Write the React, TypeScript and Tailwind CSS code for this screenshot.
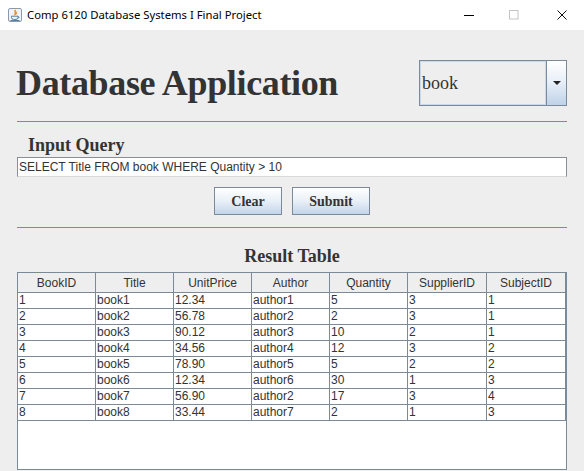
import React from 'react'

const headers = ['BookID', 'Title', 'UnitPrice', 'Author', 'Quantity', 'SupplierID', 'SubjectID']

const rows = [
  ['1', 'book1', '12.34', 'author1', '5', '3', '1'],
  ['2', 'book2', '56.78', 'author2', '2', '3', '1'],
  ['3', 'book3', '90.12', 'author3', '10', '2', '1'],
  ['4', 'book4', '34.56', 'author4', '12', '3', '2'],
  ['5', 'book5', '78.90', 'author5', '5', '2', '2'],
  ['6', 'book6', '12.34', 'author6', '30', '1', '3'],
  ['7', 'book7', '56.90', 'author2', '17', '3', '4'],
  ['8', 'book8', '33.44', 'author7', '2', '1', '3']
]

const JavaIcon = () => (
  <svg width="14" height="14" viewBox="0 0 14 14">
    <rect x="0.5" y="0.5" width="13" height="13" rx="1.5" fill="#f1f3f6" stroke="#8d99aa" />
    <path d="M7.5 2 C5.8 3.8 8.6 4.6 6.6 7" fill="none" stroke="#e76f00" strokeWidth="1.2" />
    <path d="M8.8 3.6 C7.8 4.8 9.2 5.4 8 6.6" fill="none" stroke="#e76f00" strokeWidth="0.9" />
    <path d="M3.5 8.2 H10 V9.6 A2 2 0 0 1 8 11.4 H5.5 A2 2 0 0 1 3.5 9.6 Z" fill="none" stroke="#5382a1" strokeWidth="1" />
    <path d="M10 8.8 H11 V9.8 H10" fill="none" stroke="#5382a1" strokeWidth="0.8" />
    <path d="M2.5 12.5 H11.5" stroke="#5382a1" strokeWidth="1" />
  </svg>
)

const TitleBar = () => (
  <div className="h-[30px] shrink-0 bg-white flex items-center">
    <div className="ml-[8px]">
      <JavaIcon />
    </div>
    <span className="ml-[5px] text-[11.3px] text-black font-['Noto_Sans',sans-serif] leading-none">
      Comp 6120 Database Systems I Final Project
    </span>
    <div className="ml-auto flex items-center mr-[17px]">
      {/* minimize */}
      <div className="w-[10px] h-px bg-black" />
      {/* maximize (disabled) */}
      <svg width="10" height="10" viewBox="0 0 10 10" className="ml-[35px]">
        <rect x="0.5" y="0.5" width="8.5" height="8.5" fill="none" stroke="#c4c4c4" />
      </svg>
      {/* close */}
      <svg width="10" height="10" viewBox="0 0 10 10" className="ml-[38px]">
        <path d="M0.5 0.5 L9.5 9.5 M9.5 0.5 L0.5 9.5" stroke="#111" strokeWidth="1" />
      </svg>
    </div>
  </div>
)

const ComboBox = () => (
  <div className="ml-auto w-[148px] h-[46px] border border-[#7a8a99] flex">
    <div className="flex-1 border border-[#c9d9eb] bg-[#eeeeee] flex items-center pl-[1px] text-[18px] text-[#333333] font-['Liberation_Serif',serif]">
      book
    </div>
    <div className="w-[20px] border-l border-[#7a8a99] bg-linear-to-b from-white via-[#e6eef7] to-[#bfd2e8] flex items-center justify-center">
      <svg width="8" height="4" viewBox="0 0 8 4">
        <path d="M0 0 H8 L4 4 Z" fill="#222" />
      </svg>
    </div>
  </div>
)

const Button = ({ label, width }: { label: string; width: string }) => (
  <button
    className={`${width} h-[28px] pt-[1px] border border-[#7a8a99] bg-linear-to-b from-white via-[#e9f0f8] to-[#c3d5ea] text-[14px] font-bold text-[#333333] font-['Liberation_Serif',serif] leading-none`}
  >
    {label}
  </button>
)

const ResultTable = () => (
  <div className="mt-[6px] mx-[17px] h-[198px] border border-[#7a8a99] bg-white font-['Liberation_Sans',Arial,sans-serif] text-[12px] text-[#333333]">
    <div className="grid grid-cols-[78px_78px_78px_78px_78px_79px_79px]">
      {headers.map((h) => (
        <div
          key={h}
          className="h-[20px] border-r border-b border-[#7a8a99] bg-[#eeeeee] text-center pt-[2px] leading-[17px]"
        >
          {h}
        </div>
      ))}
    </div>
    {rows.map((r, i) => (
      <div key={i} className="grid grid-cols-[78px_78px_78px_78px_78px_79px_79px]">
        {r.map((c, j) => (
          <div key={j} className="h-[16px] border-r border-b border-[#7a8a99] pl-[1px] leading-[15px]">
            {c}
          </div>
        ))}
      </div>
    ))}
  </div>
)

export default function App() {
  return (
    <div className="w-[584px] h-[471px] bg-[#eeeeee] overflow-hidden flex flex-col">
      <TitleBar />

      <div className="mt-[30px] h-[46px] flex items-center pl-[16px] pr-[17px]">
        <h1 className="text-[36px] leading-[36px] font-bold tracking-[-0.35px] text-[#333333] font-['Liberation_Serif',serif]">
          Database Application
        </h1>
        <ComboBox />
      </div>

      <div className="mt-[15px] mx-[17px] h-px bg-[#6d8bc7]" />

      <div className="mt-[13px] pl-[28px] text-[18px] leading-[20px] font-bold text-[#333333] font-['Liberation_Serif',serif]">
        Input Query
      </div>

      <div className="mt-[2px] mx-[17px] h-[20px] bg-white border border-[#8a8f96] border-b-[#d9d9d9] flex items-center pl-[1px] text-[12px] text-[#333333] font-['Liberation_Sans',Arial,sans-serif]">
        SELECT Title FROM book WHERE Quantity &gt; 10
      </div>

      <div className="mt-[10px] flex justify-center gap-[10px]">
        <Button label="Clear" width="w-[68px]" />
        <Button label="Submit" width="w-[78px]" />
      </div>

      <div className="mt-[12px] mx-[17px] h-px bg-[#6d8bc7]" />

      <div className="mt-[18px] text-center text-[18px] leading-[20px] font-bold text-[#333333] font-['Liberation_Serif',serif]">
        Result Table
      </div>

      <ResultTable />
    </div>
  )
}
